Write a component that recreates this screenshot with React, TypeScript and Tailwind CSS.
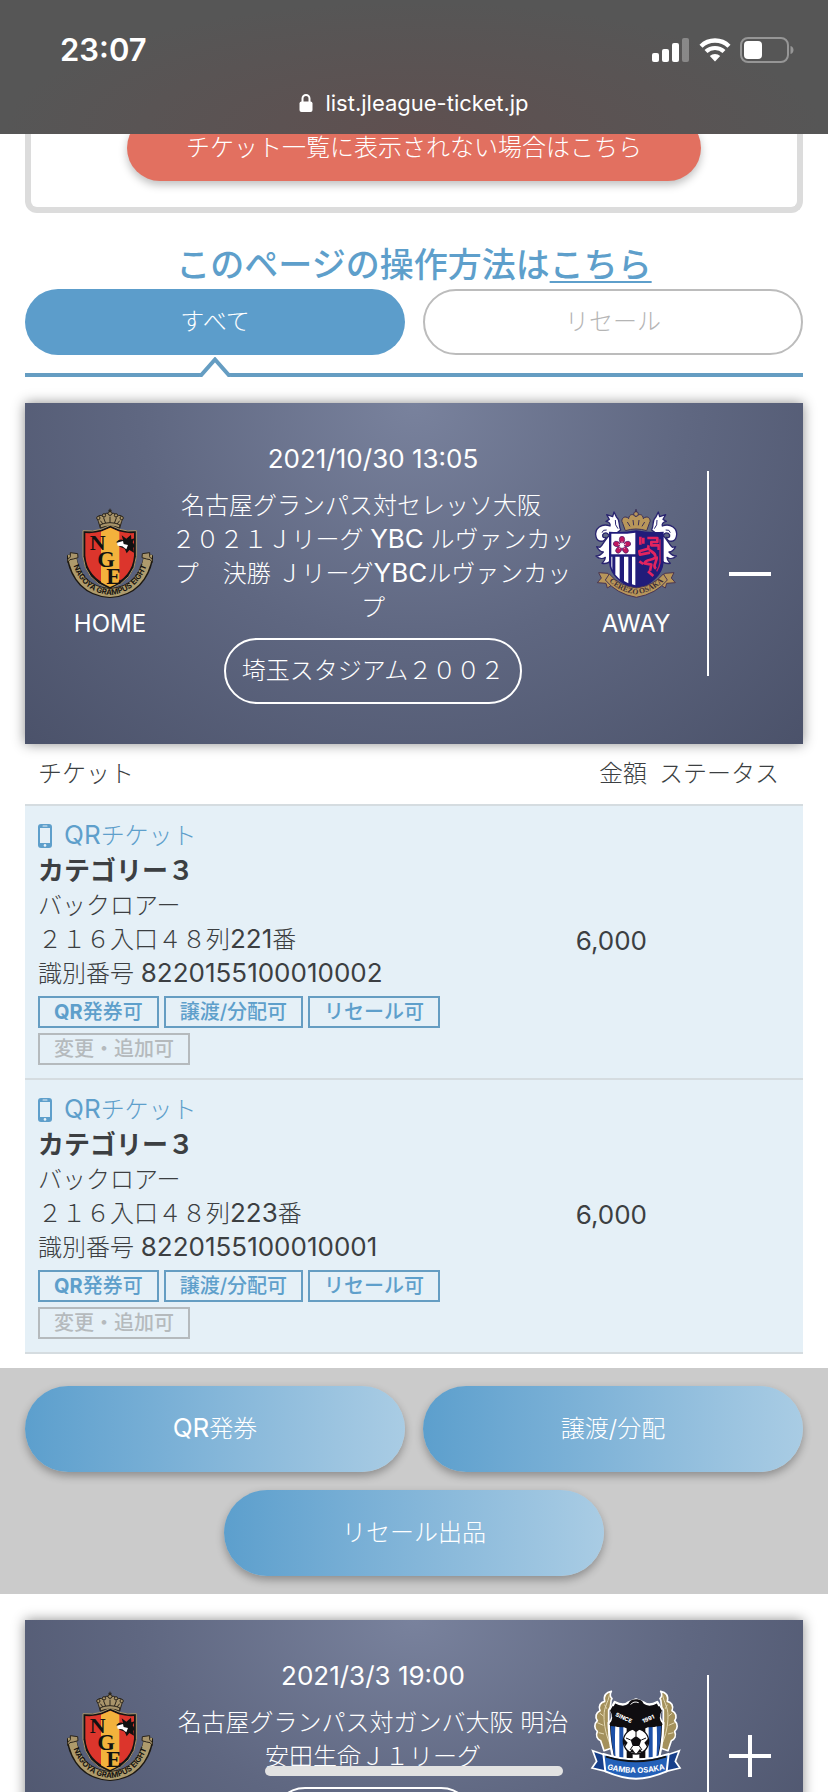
import type { ReactNode } from "react";

type Ticket = {
  row: string;
  number: string;
  code: string;
};

const tickets: Ticket[] = [
  { row: "２１６入口４８列", number: "221", code: "8220155100010002" },
  { row: "２１６入口４８列", number: "223", code: "8220155100010001" },
];

const SignalIcon = () => (
  <svg width="38" height="24" viewBox="0 0 38 24" fill="#fff" aria-hidden="true">
    <rect x="0" y="15" width="7" height="9" rx="2" />
    <rect x="10" y="11" width="7" height="13" rx="2" />
    <rect x="20" y="5" width="7" height="19" rx="2" />
    <rect x="30" y="0" width="7" height="24" rx="2" opacity=".3" />
  </svg>
);

const WifiIcon = () => (
  <svg width="32" height="24" viewBox="0 0 32 24" fill="none" aria-hidden="true">
    <path d="M2 8.2a20 20 0 0 1 28 0" stroke="#fff" strokeWidth="4.4" />
    <path d="M7 13.6a13 13 0 0 1 18 0" stroke="#fff" strokeWidth="4.2" />
    <path d="M10.8 18a7.6 7.6 0 0 1 10.4 0L16 23.6z" fill="#fff" />
  </svg>
);

const BatteryIcon = () => (
  <svg width="54" height="26" viewBox="0 0 54 26" fill="none" aria-hidden="true">
    <rect x="1" y="1" width="47" height="24" rx="7" stroke="#969696" strokeWidth="2" />
    <rect x="4" y="4" width="18" height="18" rx="4" fill="#fff" />
    <path d="M50.5 9c4 1 4 7 0 8z" fill="#969696" />
  </svg>
);

const LockIcon = () => (
  <svg width="14" height="20" viewBox="0 0 14 20" aria-hidden="true">
    <path d="M3.500 9V5.500a3.500 3.500 0 0 1 7 0V9" fill="none" stroke="#fff" strokeWidth="2" />
    <rect x="0.500" y="8.500" width="13" height="10.500" rx="2" fill="#fff" />
  </svg>
);

const PhoneIcon = () => (
  <svg width="14" height="24" viewBox="0 0 14 24" aria-hidden="true">
    <rect width="14" height="24" rx="3" fill="#5e9fcb" />
    <rect x="2" y="4" width="10" height="15" fill="#e5f0f7" />
    <rect x="4.500" y="1.500" width="5" height="1" rx=".5" fill="#e5f0f7" />
    <circle cx="7" cy="21.400" r="1.300" fill="#e5f0f7" />
  </svg>
);

const NagoyaCrest = () => (
  <svg width="86" height="92" viewBox="24 18 258 276" role="img" aria-label="名古屋グランパス">
    <g stroke="#2a241b" strokeWidth="3" fill="#a8946a">
      <path d="M124 84l-6-20c-9-16 8-24 16-12 1-14 12-16 19-6 7-10 18-8 19 6 8-12 25-4 16 12l-6 20q-29-10-58 0z" />
      <circle cx="153" cy="40" r="6" />
      <path d="M153 26v12M148 31h10" />
      <circle cx="118" cy="54" r="5" />
      <circle cx="188" cy="54" r="5" />
      <circle cx="135" cy="46" r="5" />
      <circle cx="171" cy="46" r="5" />
      <path d="M124 84q29-12 58 0v-10q-29-12-58 0z" />
      <path d="M134 54l6 16M153 50v18M172 54l-6 16M124 62l8 10M182 62l-8 10" />
    </g>
    <path
      d="M72 92q30 4 54-4l28-12 28 12q24 8 50 4v78q-6 70-80 98-74-28-80-98z"
      fill="#141414"
      stroke="#a8946a"
      strokeWidth="3"
    />
    <path d="M79 99q26 2 50-5l25-11 25 11q24 7 46 5v68q-5 64-72 91-69-27-74-91z" fill="#dc352c" />
    <path d="M126 95l28-12 27 12v152q-12 8-28 14-14-6-27-14z" fill="#f3b23c" />
    <path
      d="M172 126q10-10 20-6l-4-14 14 10 14-12 1 14 10-3-6 12q8 10 2 18l2 13-14-8-8 10-6-14-15-6z"
      fill="#111"
    />
    <path d="M174 128l18-5 2 9 13 3-5 13-12-9-14-2z" fill="#fff" />
    <path
      d="M36 163c10 70 50 112 117 116 67-4 107-46 117-116"
      fill="none"
      stroke="#1d1913"
      strokeWidth="30"
    />
    <path
      d="M38 163c10 70 50 112 115 116 65-4 105-46 115-116"
      fill="none"
      stroke="#ae9b6c"
      strokeWidth="24"
    />
    <g fill="#a8946a" stroke="#2a241b" strokeWidth="3">
      <path d="M34 158l22 3 1 12-14 4q-12-1-17 10c-3-14 8-12 8-17z" />
      <path d="M272 158l-22 3-1 12 14 4q12-1 17 10c3-14-8-12-8-17z" />
    </g>
    <g fill="#111" fontFamily="Liberation Serif, serif" fontWeight="bold">
      <text x="92" y="150" fontSize="66">N</text>
      <text x="115" y="201" fontSize="68">G</text>
      <text x="142" y="252" fontSize="68">E</text>
    </g>
    <path id="nagoya-band" d="M38 180c16 60 52 100 115 105 63-5 99-45 115-105" fill="none" />
    <text fill="#161310" fontFamily="Inter, sans-serif" fontSize="23" fontWeight="700">
      <textPath href="#nagoya-band" startOffset="50%" textAnchor="middle">
        NAGOYA GRAMPUS EIGHT
      </textPath>
    </text>
  </svg>
);

const CerezoWing = () => (
  <g stroke="#29246f" strokeWidth="4" fill="#fff" strokeLinejoin="round">
    <path d="M104 90C96 74 104 62 92 52L84 36l-4 14-18-6 8 14-10 6c10 2 14 8 12 14-24-10-48 8-42 32 4 18 26 18 30 2-10 4-14-6-6-12 8-4 16 2 18 14z" />
    <path d="M72 104c-16 14-20 30-30 38l-10-2c6 12 12 16 20 16-8 10-16 12-22 12 10 10 22 8 28 4 0 10-6 14-10 18 12 2 22-2 28-12z" />
    <path d="M62 90q-12-2-14 8M88 60q-2 16 8 26" fill="none" strokeWidth="3" />
  </g>
);

const CerezoCrest = () => (
  <svg width="86" height="92" viewBox="21 18 258 276" role="img" aria-label="セレッソ大阪">
    <CerezoWing />
    <g transform="matrix(-1 0 0 1 301 0)">
      <CerezoWing />
    </g>
    <g fill="#b8965a" stroke="#3b2f56" strokeWidth="3">
      <path d="M118 92l-8-22c-9-14 8-26 18-14 1-14 14-16 22-6 8-10 21-8 22 6 10-12 27 0 18 14l-8 22q-32-10-64 0z" />
      <circle cx="150" cy="42" r="7" />
      <path d="M150 28v8" strokeWidth="5" />
      <path d="M124 66l8 13M141 60l2 16M159 60l-2 16M176 66l-8 13" />
    </g>
    <path d="M69 95q42 4 82-4 40 8 82 4v92q-4 54-82 84-78-30-82-84z" fill="#211c7a" />
    <path d="M76 101q38 2 72-3v65H76z" fill="#fff" />
    <g fill="#c0185e" stroke="#4a1a6a" strokeWidth="2">
      <ellipse cx="108" cy="119" rx="8" ry="10" />
      <ellipse cx="92" cy="132" rx="10" ry="8" transform="rotate(18 92 132)" />
      <ellipse cx="124" cy="132" rx="10" ry="8" transform="rotate(-18 124 132)" />
      <ellipse cx="98" cy="150" rx="8" ry="10" transform="rotate(36 98 150)" />
      <ellipse cx="118" cy="150" rx="8" ry="10" transform="rotate(-36 118 150)" />
    </g>
    <path d="M108 136v-12M108 136l-12-4M108 136l12-4M108 136l-8 10M108 136l8 10" stroke="#fff" strokeWidth="2" />
    <path d="M88 170h13v68l-13-14zM114 170h13v80l-13-7zM138 170h10v86l-10-3z" fill="#fff" />
    <path d="M76 170h3v40l-3-12z" fill="#fff" />
    <path
      d="M163 110v24M172 113v18M184 114h30v12h-18v10h22v14M186 146l-26 8 2 10 30-6M188 136c-8 20 22 16 20 34-2 14-30 4-32 20l20 4-4 18M212 170c4 16-16 26-2 36M160 184l12 8M186 214l16 14"
      fill="none"
      stroke="#e2245f"
      strokeWidth="8"
      strokeLinejoin="round"
    />
    <path d="M222 118v70q-2 14-10 26" fill="none" stroke="#c8205f" strokeWidth="4" />
    <g fill="#b8965a" stroke="#4a3550" strokeWidth="3">
      <path d="M66 220l-28-2 8 16-12 14 26 2 4 14 22-14z" />
      <path d="M236 220l28-2-8 16 12 14-26 2-4 14-22-14z" />
      <path d="M70 222q30 36 81 42 51-6 81-42l12 18q-34 42-93 52-59-10-93-52z" />
    </g>
    <path id="cerezo-band" d="M64 238q34 38 87 45 53-7 87-45" fill="none" />
    <text fill="#3a2a35" fontFamily="Liberation Serif, serif" fontSize="23" fontWeight="700">
      <textPath href="#cerezo-band" startOffset="50%" textAnchor="middle">
        CEREZO OSAKA
      </textPath>
    </text>
  </svg>
);

const GambaLaurel = () => (
  <g>
    <path
      d="M94 34c-16 2-24 14-20 30-12 2-20 14-14 28-12 6-16 18-8 30-10 10-10 24 0 32-6 14 0 24 10 28l10 30 30-10-16-56V90c12-14 2-26 10-34-6-6-8-12-2-22z"
      fill="#a4915c"
      stroke="#fff"
      strokeWidth="5"
      strokeLinejoin="round"
    />
    <path
      d="M88 46c-4 22-16 34-16 62s6 56 18 84M74 74l6 12M60 100l10 8M52 128l18 8M56 158l16 4"
      fill="none"
      stroke="#e4d9b4"
      strokeWidth="3"
    />
  </g>
);

const GambaCrest = () => (
  <svg
    width="86"
    height="92"
    viewBox="39 27 258 276"
    className="overflow-visible"
    role="img"
    aria-label="ガンバ大阪"
  >
    <GambaLaurel />
    <g transform="matrix(-1 0 0 1 336 0)">
      <GambaLaurel />
    </g>
    <path
      d="M104 66q26 14 40 2l24-10 24 10q16 12 40-2l12 22q-14 26 6 40-2 80-20 128H106Q88 200 86 128q20-14 6-40z"
      fill="#0f0d10"
      stroke="#fff"
      strokeWidth="7"
      strokeLinejoin="round"
    />
    <path d="M92 138l44 4v106h-28q-14-44-16-110zM244 138l-44 4v106h28q14-44 16-110z" fill="#1c50a8" />
    <path d="M106 132l12 6v106h-10q-5-40-2-112zM230 132l-12 6v106h10q5-40 2-112zM130 136h10v114h-10zM196 136h10v114h-10zM158 200h20v50h-20z" fill="#fff" />
    <path
      d="M98 78q26 12 48 2c-4-12 6-22 22-22 14 0 22 6 24 18l-18 0c0 10 6 16 14 14q24 2 50-12l8 14q-14 20 2 42-22 8-44 8l-36 14-36-14q-22 0-44-8 16-22 2-42z"
      fill="#0f0d10"
    />
    <path d="M152 74q8-12 24-6" fill="none" stroke="#fff" strokeWidth="3" />
    <circle cx="168" cy="184" r="38" fill="#fff" stroke="#0f0d10" strokeWidth="4" />
    <g fill="#0f0d10">
      <path d="M168 168l16 12-6 18h-20l-6-18z" />
      <path d="M156 148q12-5 24 0l-12 9zM204 176q3 14-3 24l-8-12zM132 176q-3 14 3 24l8-12zM150 216l6-10 10 14zM186 216l-6-10-10 14z" />
    </g>
    <path
      d="M168 168v-12M184 180l14-6M178 198l8 12M158 198l-8 12M152 180l-14-6"
      stroke="#0f0d10"
      strokeWidth="3"
    />
    <g fill="#fff" fontFamily="Inter, sans-serif" fontSize="17" fontWeight="800">
      <text x="105" y="108" transform="rotate(24 105 108)">SINCE</text>
      <text x="190" y="130" transform="rotate(-24 190 130)">1991</text>
    </g>
    <path d="M38 212l40 14v48l-42-10 14-20zM298 212l-40 14v48l42-10-14-20z" fill="#173f8a" stroke="#fff" strokeWidth="5" />
    <path
      d="M70 222q98 32 196 0l-6 52q-52 22-92 22t-92-22z"
      fill="#2360b8"
      stroke="#fff"
      strokeWidth="6"
      strokeLinejoin="round"
    />
    <path d="M78 230q90 28 180 0" fill="none" stroke="#111" strokeWidth="5" />
    <path id="gamba-band" d="M76 266q92 26 184 0" fill="none" />
    <text fill="#fff" fontFamily="Inter, sans-serif" fontSize="23" fontWeight="700">
      <textPath href="#gamba-band" startOffset="50%" textAnchor="middle">
        GAMBA OSAKA
      </textPath>
    </text>
  </svg>
);

// Latin letters and digits run a little larger than the kana and kanji
const Latin = ({ children }: { children: ReactNode }) => (
  <span className="text-[26px] leading-none font-normal">{children}</span>
);

const Team = ({ crest, label }: { crest: ReactNode; label: string }) => (
  <div className="flex w-[120px] shrink-0 flex-col items-center gap-[9px]">
    {crest}
    <span className="font-normal">{label}</span>
  </div>
);

type MatchCardProps = {
  date: string;
  lines: ReactNode[];
  stadium: string;
  away: ReactNode;
  open?: boolean;
};

const MatchCard = ({ date, lines, stadium, away, open }: MatchCardProps) => (
  <section className="mx-[25px] flex bg-[radial-gradient(ellipse_at_top,#79829d_0%,#5f6781_50%,#4b526a_100%)] text-white shadow-[0_0_12px_rgba(0,0,0,0.45)]">
    <div className="flex min-w-0 flex-1 items-center pt-[39px] pr-[11px] pb-10 pl-[25px]">
      <Team crest={<NagoyaCrest />} label="HOME" />
      <div className="flex min-w-0 flex-1 flex-col items-center gap-[13px] text-center">
        <time className="text-[26px] font-normal">{date}</time>
        <h2 className="whitespace-pre">
          {lines.map((line, i) => (
            <span key={i} className="block">
              {line}
            </span>
          ))}
        </h2>
        <div className="flex h-[66px] items-center rounded-full border-2 border-white px-4 whitespace-nowrap">
          {stadium}
        </div>
      </div>
      <Team crest={away} label="AWAY" />
    </div>
    <div className="flex w-24 shrink-0 items-center">
      <button
        type="button"
        aria-label={open ? "閉じる" : "開く"}
        className="flex h-3/5 w-full items-center justify-center border-l-2 border-white pr-3"
      >
        <svg width="42" height="42" viewBox="0 0 42 42" stroke="#fff" strokeWidth="4" aria-hidden="true">
          <path d="M0 21h42" />
          {!open && <path d="M21 0v42" />}
        </svg>
      </button>
    </div>
  </section>
);

const Tag = ({ children, muted }: { children: ReactNode; muted?: boolean }) => (
  <span
    className={
      muted
        ? "flex h-8 items-center border-2 border-[#b5babd] px-[14px] text-[#b5babd]"
        : "flex h-8 items-center border-2 border-[#659dc2] px-[14px] text-[#5e9fcb]"
    }
  >
    {children}
  </span>
);

const TicketRow = ({ ticket }: { ticket: Ticket }) => (
  <tr className="border-y-2 border-[#d5dce0] bg-[#e5f0f7]">
    <td className="pt-[13px] pb-[13px] pl-[13px]">
      <div className="flex items-center gap-3 text-[#5e9fcb]">
        <PhoneIcon />
        <span>
          <Latin>QR</Latin>チケット
        </span>
      </div>
      <p className="text-[26px] leading-9 font-bold">カテゴリー３</p>
      <p>バックロアー</p>
      <p>
        {ticket.row}
        <Latin>{ticket.number}</Latin>番
      </p>
      <p>
        識別番号 <Latin>{ticket.code}</Latin>
      </p>
      <div className="mt-[5px] flex max-w-[420px] flex-wrap gap-[5px] text-xl leading-7 font-medium">
        <Tag>
          <span className="font-bold">QR</span>発券可
        </Tag>
        <Tag>譲渡/分配可</Tag>
        <Tag>リセール可</Tag>
        <Tag muted>変更・追加可</Tag>
      </div>
    </td>
    <td className="pr-[6px] text-right align-middle">
      <Latin>6,000</Latin>
    </td>
    <td />
  </tr>
);

const ActionButton = ({ children }: { children: ReactNode }) => (
  <button
    type="button"
    className="h-[86px] w-[calc(50%-9px)] rounded-full bg-linear-to-r from-[#5c9fcd] to-[#a9cce4] text-white shadow-[0_4px_8px_rgba(0,0,0,0.3)]"
  >
    {children}
  </button>
);

export default function App() {
  return (
    <div
      lang="ja"
      className="min-h-screen bg-white font-['Inter','Noto_Sans_CJK_JP',sans-serif] text-[24px] leading-[34px] font-light text-[#3c3f42]"
    >
      <header className="sticky top-0 z-20 flex h-[134px] flex-col bg-[#565656] bg-[radial-gradient(ellipse_at_bottom,#5f5050_0%,#565656_70%)] text-white">
        <div className="flex items-center justify-between pt-7 pr-[34px] pl-[60px]">
          <span className="text-[31px] leading-11 font-semibold">23:07</span>
          <div className="flex items-center gap-[9px]">
            <SignalIcon />
            <WifiIcon />
            <BatteryIcon />
          </div>
        </div>
        <div className="mt-[14px] flex items-center justify-center gap-3 text-[22px] font-normal">
          <LockIcon />
          list.jleague-ticket.jp
        </div>
      </header>

      <main>
        <div className="mx-[25px] -mt-[19px] flex justify-center rounded-b-xl border-[6px] border-t-0 border-[#dcdcdc] pb-[26px]">
          <a
            href="#help"
            className="flex h-[66px] w-3/4 items-center justify-center rounded-full bg-[#e27060] text-white shadow-[0_4px_8px_rgba(0,0,0,0.25)]"
          >
            チケット一覧に表示されない場合はこちら
          </a>
        </div>

        <p className="mt-7 text-center text-[34px] leading-12 font-medium text-[#5e9fcb]">
          このページの操作方法は
          <a href="#guide" className="underline decoration-2 underline-offset-4">
            こちら
          </a>
        </p>

        <div className="mx-[25px]">
          <div className="grid grid-cols-2 gap-[18px]">
            <button type="button" className="h-[66px] rounded-full bg-[#5c9dcb] text-white">
              すべて
            </button>
            <button
              type="button"
              className="h-[66px] rounded-full border-2 border-[#bcbcbc] text-[#b5b5b5]"
            >
              リセール
            </button>
          </div>
          <div className="mt-[2px] grid grid-cols-2 gap-[18px] border-b-4 border-[#659dc2]">
            <svg width="34" height="20" viewBox="0 0 34 20" className="-mb-1 justify-self-center" aria-hidden="true">
              <path d="M1 20L17 2l16 18z" fill="#fff" />
              <path d="M1.500 20L17 2.500 32.500 20" fill="none" stroke="#659dc2" strokeWidth="4" />
            </svg>
          </div>
        </div>

        <div className="mt-[26px]">
          <MatchCard
            open
            date="2021/10/30 13:05"
            lines={[
              "名古屋グランパス対セレッソ大阪　",
              <>
                ２０２１Ｊリーグ <Latin>YBC</Latin> ルヴァンカッ
              </>,
              <>
                プ　決勝 Ｊリーグ<Latin>YBC</Latin>ルヴァンカッ
              </>,
              "プ",
            ]}
            stadium="埼玉スタジアム２００２"
            away={<CerezoCrest />}
          />
        </div>

        <div className="mx-[25px]">
          <table className="w-full border-collapse text-left">
            <thead>
              <tr>
                <th className="pt-[13px] pb-[13px] pl-[13px] font-light">チケット</th>
                <th className="w-[110px] pr-[6px] text-right font-light">金額</th>
                <th className="w-[150px] pl-[6px] font-light">ステータス</th>
              </tr>
            </thead>
            <tbody>
              {tickets.map((ticket) => (
                <TicketRow key={ticket.code} ticket={ticket} />
              ))}
            </tbody>
          </table>
        </div>

        <div className="mt-[14px] flex flex-wrap justify-center gap-[18px] bg-[#cbcbcb] px-[25px] py-[18px]">
          <ActionButton>
            <Latin>QR</Latin>発券
          </ActionButton>
          <ActionButton>譲渡/分配</ActionButton>
          <ActionButton>リセール出品</ActionButton>
        </div>

        <div className="mt-[26px]">
          <MatchCard
            date="2021/3/3 19:00"
            lines={["名古屋グランパス対ガンバ大阪 明治", "安田生命Ｊ１リーグ"]}
            stadium="豊田スタジアム"
            away={<GambaCrest />}
          />
        </div>
      </main>

      <div className="pointer-events-none fixed inset-x-0 bottom-4 z-20 flex justify-center">
        <div className="h-[10px] w-[36%] rounded-full bg-[#e2e2e2]" />
      </div>
    </div>
  );
}
